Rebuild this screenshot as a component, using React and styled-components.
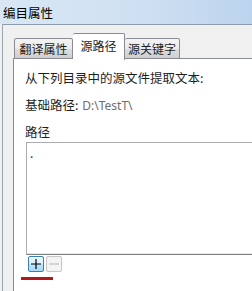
import React from "react";
import styled, { createGlobalStyle } from "styled-components";

const GlobalStyle = createGlobalStyle`
  html, body {
    margin: 0;
    padding: 0;
    background: #f0f0f0;
  }
  body {
    font-family: "Noto Sans CJK SC", "Liberation Sans", sans-serif;
    color: #1e1e1e;
  }
`;

const Window = styled.div`
  width: 252px;
  height: 291px;
  overflow: hidden;
  display: flex;
  flex-direction: column;
`;

const TitleBar = styled.div`
  height: 24px;
  flex: none;
  display: flex;
  align-items: center;
  padding-left: 3px;
  font-size: 12.5px;
  color: #000;
  background: linear-gradient(90deg, #d9e7f5 0%, #cfe0f2 55%, #bcd4ee 100%);
`;

const Body = styled.div`
  flex: 1;
  width: 320px;
  background: #f0f0f0;
  border-top: 1px solid #8c9aab;
  border-left: 1px solid #9aa6b4;
  margin-left: 2px;
  padding: 8px 0 0 10px;
  box-sizing: border-box;
`;

const TabStrip = styled.div`
  display: flex;
  align-items: flex-end;
  height: 26px;
  padding-left: 1px;
  position: relative;
  z-index: 1;
`;

const Tab = styled.div`
  box-sizing: border-box;
  width: ${(p) => p.$w}px;
  height: ${(p) => (p.$active ? 27 : 21)}px;
  margin-bottom: ${(p) => (p.$active ? -1 : 0)}px;
  display: flex;
  align-items: ${(p) => (p.$active ? "flex-start" : "center")};
  padding-top: ${(p) => (p.$active ? 4 : 0)}px;
  justify-content: center;
  font-size: 12px;
  line-height: 16px;
  color: #1e1e1e;
  border: 1px solid #898c95;
  border-bottom: ${(p) => (p.$active ? "none" : "1px solid #898c95")};
  border-left: ${(p) => (p.$noLeft ? "none" : "1px solid #898c95")};
  border-radius: 2px 2px 0 0;
  background: ${(p) =>
    p.$active ? "#ffffff" : "linear-gradient(#f3f3f3 0%, #ebebeb 50%, #dddddd 51%, #cfcfcf 100%)"};
`;

const Pane = styled.div`
  flex: 1;
  height: 240px;
  background: #ffffff;
  border: 1px solid #898c95;
  margin-top: -1px;
  padding: 11px 0 0 11px;
  box-sizing: border-box;
`;

const Line = styled.div`
  font-size: 12.5px;
  line-height: 16px;
  height: 16px;
  margin-bottom: ${(p) => p.$gap}px;
  white-space: nowrap;
`;

const Muted = styled.span`
  color: #6d6d6d;
  font-family: "Noto Sans", "Liberation Sans", sans-serif;
  font-size: 12px;
  margin-left: 1px;
`;

const PathList = styled.div`
  box-sizing: border-box;
  margin-left: 1px;
  width: 290px;
  height: 113px;
  border: 1px solid #abadb3;
  border-bottom: 1px solid #808080;
  box-shadow: inset 0 -1px 0 #e8e8e8;
  background: #fff;
  padding: 4px 0 0 3px;
  font-size: 12px;
  line-height: 12px;
`;

const ButtonRow = styled.div`
  display: flex;
  gap: 2px;
  margin: 1px 0 0 3px;
`;

const SquareButton = styled.div`
  box-sizing: border-box;
  width: 16px;
  height: 16px;
  border-radius: 2px;
  display: flex;
  align-items: center;
  justify-content: center;
  border: 1px solid ${(p) => (p.$disabled ? "#c6c6c6" : "#3c7fb1")};
  background: ${(p) =>
    p.$disabled ? "#f4f4f4" : "linear-gradient(#eaf6fd 0%, #d9f0fc 50%, #bee6fd 51%, #a7d9f5 100%)"};
`;

const Underline = styled.div`
  width: 32px;
  height: 3px;
  background: #b3161c;
  margin: 5px 0 0 -4px;
`;

const Plus = () => (
  <svg width="12" height="12" viewBox="0 0 12 12">
    <path d="M6 1v10M1 6h10" stroke="#000" strokeWidth="1.2" fill="none" />
  </svg>
);

const Minus = () => (
  <svg width="12" height="12" viewBox="0 0 12 12">
    <path d="M1 6h10" stroke="#b4b4b4" strokeWidth="1" fill="none" />
  </svg>
);

export default function App() {
  return (
    <Window>
      <GlobalStyle />
      <TitleBar>编目属性</TitleBar>
      <Body>
        <TabStrip>
          <Tab $w={59}>翻译属性</Tab>
          <Tab $w={52} $active $noLeft>源路径</Tab>
          <Tab $w={55} $noLeft>源关键字</Tab>
        </TabStrip>
        <Pane>
          <Line $gap={11}>从下列目录中的源文件提取文本:</Line>
          <Line $gap={11}>
            基础路径: <Muted>D:\TestT\</Muted>
          </Line>
          <Line $gap={2}>路径</Line>
          <PathList>.</PathList>
          <ButtonRow>
            <SquareButton>
              <Plus />
            </SquareButton>
            <SquareButton $disabled>
              <Minus />
            </SquareButton>
          </ButtonRow>
          <Underline />
        </Pane>
      </Body>
    </Window>
  );
}
